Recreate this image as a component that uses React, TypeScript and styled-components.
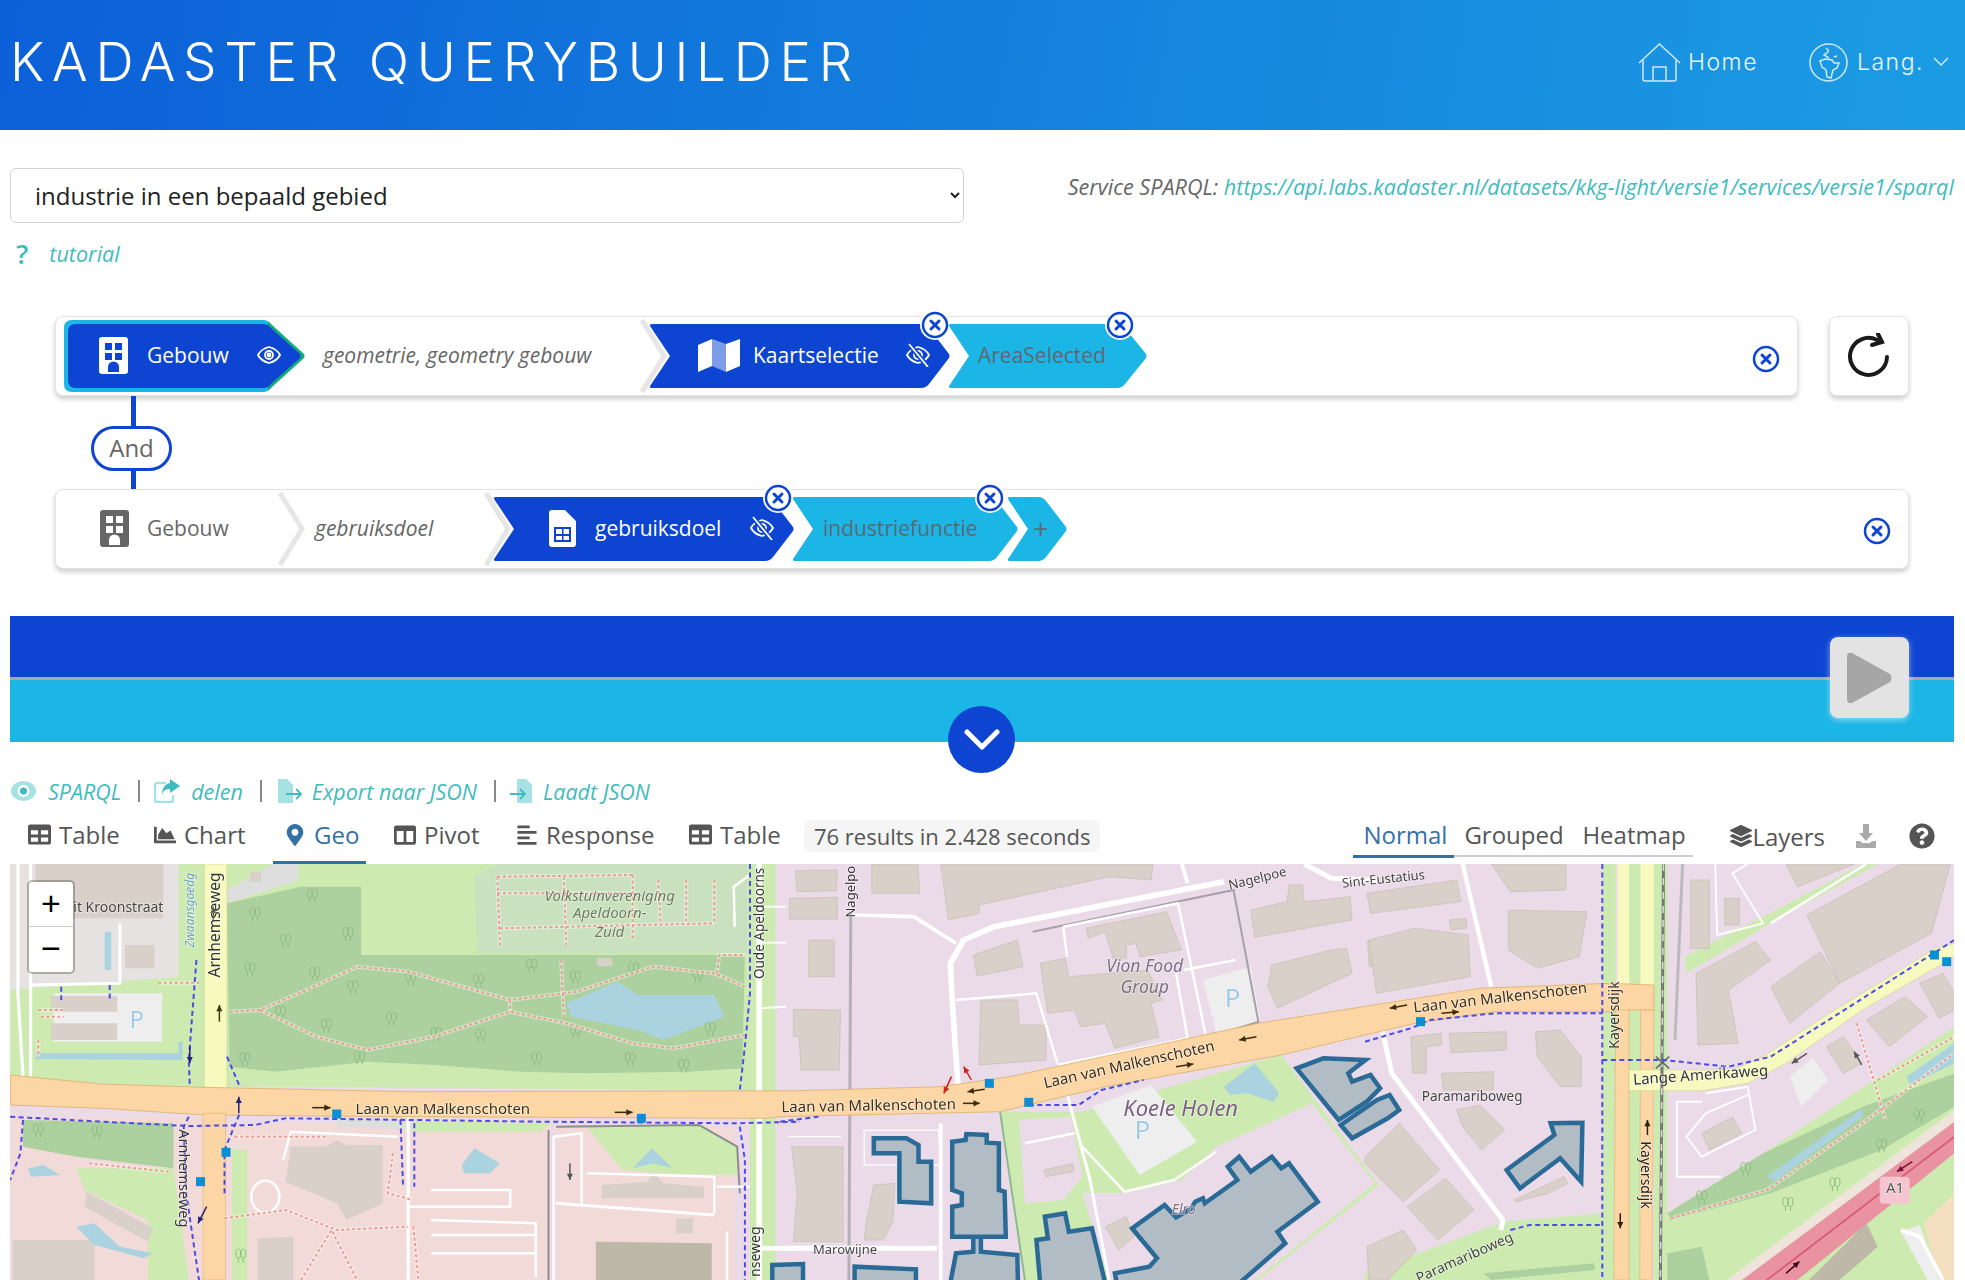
import React from 'react';
import styled, { createGlobalStyle } from 'styled-components';
import {
  FaTable, FaChartArea, FaMapMarkerAlt, FaColumns, FaAlignLeft, FaLayerGroup, FaQuestionCircle,
} from 'react-icons/fa';

const BLUE = '#0d45d2';
const CYAN = '#1bb5e6';
const TEAL = '#3fbcc0';

const GlobalStyle = createGlobalStyle`
  html, body {
    margin: 0;
    padding: 0;
    background: #fff;
    overflow: hidden;
    font-family: "Open Sans", "Liberation Sans", sans-serif;
    color: #555;
  }
  * { box-sizing: border-box; }
`;

// clip path for the query builder arrows, the notch is left out for the first one in a row
const arrowPath = (w: number, h: number, notch: number, tip: number) => {
  const left = notch
    ? `L 4 ${h} Q 0 ${h} 1 ${h - 2} L ${notch} ${h / 2} L 1 2 Q 0 0 4 0`
    : `L 8 ${h} Q 0 ${h} 0 ${h - 8} L 0 8 Q 0 0 8 0`;
  return `M ${notch ? 4 : 8} 0 L ${w - tip - 5} 0 Q ${w - tip} 0 ${w - tip + 3} 4 L ${w - 1} ${h / 2 - 2} Q ${w} ${h / 2} ${w - 1} ${h / 2 + 2} L ${w - tip + 3} ${h - 4} Q ${w - tip} ${h} ${w - tip - 5} ${h} ${left} Z`;
};

const Header = styled.header`
  height: 130px;
  background: linear-gradient(100deg, #0c5fd8 0%, #1480dd 50%, #1b9ce3 100%);
  display: flex;
  align-items: center;
  color: #fff;
  padding: 0 16px 0 10px;
`;

const Title = styled.h1`
  margin: 0;
  font-family: Inter, "Open Sans", sans-serif;
  font-weight: 300;
  font-size: 53px;
  letter-spacing: 7.7px;
  flex: 1;
  position: relative;
  top: -3px;
`;

const NavItem = styled.div<{ $gap: number; $textGap: number }>`
  display: flex;
  align-items: center;
  gap: ${(p) => p.$textGap}px;
  margin-left: ${(p) => p.$gap}px;
  font-family: Inter, "Open Sans", sans-serif;
  font-weight: 300;
  font-size: 23px;
  letter-spacing: 1.5px;
  color: #e8f4fc;
  position: relative;
  top: -3px;
`;

const TopRow = styled.div`
  display: flex;
  justify-content: space-between;
  padding: 38px 11px 0 10px;
`;

const QuerySelect = styled.select`
  width: 954px;
  height: 55px;
  padding-left: 20px;
  font-family: "Open Sans", sans-serif;
  font-size: 24px;
  color: #222;
  background: #fff;
  border: 1px solid #d2d2d6;
  border-radius: 6px;
`;

const Service = styled.div`
  font-style: italic;
  font-size: 21.6px;
  line-height: 38px;
  color: #666;
  white-space: nowrap;
`;

const TealLink = styled.span`
  color: ${TEAL};
  font-style: italic;
`;

const Tutorial = styled.div`
  display: flex;
  align-items: center;
  gap: 21px;
  height: 34px;
  margin: 13px 0 46px 16px;
  font-size: 21.6px;
`;

const QuestionMark = styled.span`
  color: ${TEAL};
  font-size: 27px;
  font-weight: 600;
`;

const Builder = styled.section`
  padding: 0 56px 0 55px;
`;

const RowLine = styled.div`
  display: flex;
  gap: 31px;
`;

const Card = styled.div`
  flex: 1;
  height: 80px;
  display: flex;
  align-items: center;
  padding-left: 8px;
  background: #fff;
  border: 1px solid #e4e4e4;
  border-radius: 8px;
  box-shadow: 0 3px 5px rgba(0, 0, 0, 0.2);
`;

const Connector = styled.div`
  height: 93px;
  margin-left: 36px;
  width: 81px;
  display: flex;
  flex-direction: column;
  align-items: center;
`;

const Stem = styled.div<{ $h: number }>`
  width: 5px;
  height: ${(p) => p.$h}px;
  background: ${BLUE};
  margin-left: 3px;
`;

const AndPill = styled.div`
  width: 81px;
  height: 45px;
  line-height: 38px;
  text-align: center;
  font-size: 24px;
  color: #666;
  border: 3px solid ${BLUE};
  border-radius: 23px;
`;

const RootOutline = styled.div`
  position: relative;
  width: 241px;
  height: 72px;
  padding: 4px;
  background: linear-gradient(90deg, ${CYAN} 0, ${CYAN} 204px, #14ab7a 204px);
  clip-path: path('${arrowPath(241, 72, 0, 37)}');
`;

const Chip = styled.div<{ $w: number; $overlap?: number }>`
  position: relative;
  flex: none;
  width: ${(p) => p.$w}px;
  height: 64px;
  margin-left: ${(p) => p.$overlap ?? 0}px;
`;

const ChipBody = styled.div<{ $path: string; $bg: string; $pad: number; $gap: number; $fg: string; $size?: number }>`
  width: 100%;
  height: 100%;
  display: flex;
  align-items: center;
  gap: ${(p) => p.$gap}px;
  padding: 0 20px 2px ${(p) => p.$pad}px;
  background: ${(p) => p.$bg};
  color: ${(p) => p.$fg};
  font-size: ${(p) => p.$size ?? 21}px;
  white-space: nowrap;
  clip-path: path('${(p) => p.$path}');
`;

const EyeSlot = styled.span`
  margin-left: auto;
  display: flex;
`;

const PlainRoot = styled.div`
  width: 214px;
  display: flex;
  align-items: center;
  gap: 18px;
  padding: 0 0 2px 36px;
  font-size: 21px;
  color: #666;
`;

const PredicateLabel = styled.div<{ $w: number; $left: number }>`
  width: ${(p) => p.$w}px;
  margin-left: ${(p) => p.$left}px;
  padding-bottom: 2px;
  font-style: italic;
  font-size: 21px;
  color: #666;
  white-space: nowrap;
`;

const Chevron = styled.svg<{ $after: number }>`
  flex: none;
  margin-right: ${(p) => p.$after}px;
`;

const BadgeWrap = styled.span<{ $right: number }>`
  position: absolute;
  top: -13px;
  right: ${(p) => p.$right}px;
  width: 28px;
  height: 28px;
  border-radius: 50%;
  background: #fff;
  display: flex;
  box-shadow: 0 0 0 1px #fff;
`;

const RowClose = styled.span<{ $down: number }>`
  margin-left: auto;
  margin-right: 17px;
  margin-top: ${(p) => p.$down}px;
  display: flex;
`;

const RefreshButton = styled.div`
  flex: none;
  width: 80px;
  height: 80px;
  display: flex;
  align-items: center;
  justify-content: center;
  border: 1px solid #e4e4e4;
  border-radius: 8px;
  box-shadow: 0 3px 5px rgba(0, 0, 0, 0.2);
`;

const RunBar = styled.section`
  position: relative;
  height: 126px;
  margin: 47px 11px 0 10px;
  background: linear-gradient(180deg, ${BLUE} 0, ${BLUE} 61px, #a8a8a8 61px, #a8a8a8 64px, ${CYAN} 64px);
`;

const PlayButton = styled.div`
  position: absolute;
  top: 21px;
  right: 45px;
  width: 79px;
  height: 81px;
  border-radius: 8px;
  background: #e3e3e3;
  box-shadow: 0 2px 6px rgba(255, 255, 255, 0.5);
  display: flex;
  align-items: center;
  justify-content: center;
`;

const CollapseButton = styled.div`
  position: absolute;
  top: 90px;
  left: 938px;
  width: 67px;
  height: 67px;
  border-radius: 50%;
  background: ${BLUE};
  display: flex;
  align-items: center;
  justify-content: center;
`;

const LinkRow = styled.div`
  display: flex;
  align-items: center;
  height: 34px;
  margin: 32px 0 12px 11px;
  font-size: 21.5px;
`;

const LinkItem = styled(TealLink)<{ $gap: number }>`
  display: flex;
  align-items: center;
  gap: ${(p) => p.$gap}px;
`;

const Pipe = styled.span`
  width: 2px;
  height: 22px;
  margin: 0 14px 0 17px;
  background: #888;
`;

const ResultBar = styled.div`
  display: flex;
  align-items: flex-start;
  height: 44px;
  padding-left: 17px;
  padding-right: 30px;
`;

const Tab = styled.div<{ $w: number; $active?: boolean; $mr?: number }>`
  width: ${(p) => p.$w}px;
  height: 44px;
  margin-right: ${(p) => p.$mr ?? 14}px;
  padding: 0 0 12px 11px;
  display: flex;
  align-items: center;
  gap: 8px;
  font-size: 24px;
  white-space: nowrap;
  color: ${(p) => (p.$active ? '#3470a8' : '#555')};
  border-bottom: 3px solid ${(p) => (p.$active ? '#3470a8' : 'transparent')};
`;

const ResultCount = styled.div`
  height: 32px;
  padding: 0 10px;
  border-radius: 8px;
  background: #f5f5f5;
  font-size: 22px;
  line-height: 32px;
  white-space: nowrap;
`;

const ModeTabs = styled.div`
  margin-left: auto;
  display: flex;
  height: 37px;
  border-bottom: 2px solid #ccc;
  width: 340px;
`;

const Mode = styled.div<{ $w: number; $active?: boolean; $mr?: number }>`
  width: ${(p) => p.$w}px;
  height: 38px;
  margin-right: ${(p) => p.$mr ?? 0}px;
  padding-left: ${(p) => (p.$active ? 10 : 0)}px;
  font-size: 24px;
  line-height: 30px;
  color: ${(p) => (p.$active ? '#3470a8' : '#555')};
  border-bottom: ${(p) => (p.$active ? '3px solid #3470a8' : 'none')};
`;

const MapTools = styled.div`
  display: flex;
  align-items: center;
  height: 32px;
  margin-left: 37px;
  font-size: 24px;
`;

const ToolGap = styled.span<{ $w: number }>`
  width: ${(p) => p.$w}px;
`;

const MapFrame = styled.div`
  position: relative;
  height: 416px;
  margin: 0 11px 0 10px;
  overflow: hidden;
`;

const MapSvg = styled.svg`
  display: block;
  filter: blur(0.45px);
  font-family: "Noto Sans", "Open Sans", sans-serif;
`;

const ZoomControl = styled.div`
  position: absolute;
  top: 16px;
  left: 17px;
  width: 48px;
  height: 94px;
  border: 2px solid rgba(0, 0, 0, 0.25);
  border-radius: 5px;
  background: #fff;
  background-clip: padding-box;
`;

const ZoomButton = styled.div<{ $top?: boolean }>`
  height: 45px;
  line-height: 42px;
  text-align: center;
  font-family: "Liberation Sans", sans-serif;
  font-size: 34px;
  color: #000;
  border-bottom: ${(p) => (p.$top ? '1px solid #ccc' : 'none')};
`;

const BuildingIcon = ({ fg }: { fg: string }) => (
  <svg width="29" height="37" viewBox="0 0 29 37">
    <path
      fill={fg}
      fillRule="evenodd"
      d="M3 0h23a3 3 0 0 1 3 3v31a3 3 0 0 1-3 3H3a3 3 0 0 1-3-3V3a3 3 0 0 1 3-3zM6 6v7h7V6zM16 6v7h7V6zM6 16v7h7v-7zM16 16v7h7v-7zM9 35h11v-5a5.500 5.500 0 0 0-11 0z"
    />
  </svg>
);

const MapIcon = () => (
  <svg width="42" height="33" viewBox="0 0 42 33">
    <path fill="#fff" d="M0 6 14 0v27L0 33z" />
    <path fill="#7f9ce8" d="M14 0l14 5v28l-14-6z" />
    <path fill="#fff" d="M28 5l14-5v27l-14 6z" />
  </svg>
);

const FileIcon = () => (
  <svg width="27" height="37" viewBox="0 0 27 37">
    <path
      fill="#fff"
      fillRule="evenodd"
      d="M3 0h13l11 11v23a3 3 0 0 1-3 3H3a3 3 0 0 1-3-3V3a3 3 0 0 1 3-3zM5 17v15h17V17zM7 19h6v5H7zM14.500 19H20v5h-5.500zM7 26h6v4H7zM14.500 26H20v4h-5.500z"
    />
  </svg>
);

const EyeIcon = ({ off }: { off?: boolean }) => (
  <svg width="24" height="24" viewBox="0 0 24 24" fill="none" stroke="#fff" strokeWidth="1.800">
    <path d="M1 12 Q4 6 12 4 Q20 6 23 12 Q20 18 12 20 Q4 18 1 12z" />
    <circle cx="12" cy="12" r="4" />
    {!off && <circle cx="12" cy="12" r="1.500" fill="#fff" />}
    {off && <path stroke={BLUE} strokeWidth="5" d="M3 1 21 23" />}
    {off && <path d="M3 1 22 24" />}
  </svg>
);

const CloseIcon = ({ size = 28 }: { size?: number }) => (
  <svg width={size} height={size} viewBox="0 0 28 28" fill="none" stroke={BLUE}>
    <circle cx="14" cy="14" r="12" strokeWidth="2.500" />
    <path strokeWidth="3" strokeLinecap="round" d="M10 10l8 8M18 10l-8 8" />
  </svg>
);

const HomeIcon = () => (
  <svg width="43" height="39" viewBox="0 0 43 39" fill="none" stroke="#cfe8fa" strokeWidth="1.500">
    <path d="M1 20 21.500 1 42 20" />
    <path d="M5 17v19a2 2 0 0 0 2 2h29a2 2 0 0 0 2-2V17" />
    <path d="M15 38V24h13v14" />
  </svg>
);

const GlobeIcon = () => (
  <svg width="39" height="39" viewBox="0 0 39 39" fill="none" stroke="#cfe8fa" strokeWidth="1.500">
    <circle cx="19.500" cy="19.500" r="18.500" />
    <path d="M17 5q3 2 2 4l-4 3 5 3M11 18l5-2 7 1 2 3 5 0-2 5-4 2-2 8-4-1-1-7-4-3z" />
    <path d="M25 14l3-1" />
  </svg>
);

const RefreshIcon = () => (
  <svg width="44" height="46" viewBox="0 0 44 46" fill="none" stroke="#1a1a1a" strokeWidth="4" strokeLinecap="round">
    <path d="M40 24a18.500 18.500 0 1 1-10-17" />
    <path d="M31 1l4 8-10 3" />
  </svg>
);

const SparqlEye = () => (
  <svg width="25" height="22" viewBox="0 0 25 22">
    <ellipse cx="12.500" cy="11" rx="12.500" ry="10" fill="#a6e2e4" />
    <circle cx="12.500" cy="11" r="6" fill="#fff" />
    <circle cx="12.500" cy="11" r="3.500" fill={TEAL} />
  </svg>
);

const ShareIcon = () => (
  <svg width="26" height="24" viewBox="0 0 26 24" fill="none">
    <path stroke="#a6e2e4" strokeWidth="2.500" d="M12 4H3a2 2 0 0 0-2 2v15a2 2 0 0 0 2 2h14a2 2 0 0 0 2-2v-5" />
    <path fill={TEAL} d="M16 0l10 7-10 7v-4c-5 0-7 2-8 6 0-7 3-11 8-12z" />
  </svg>
);

const FileArrow = ({ w }: { w: number }) => (
  <svg width={w} height="24" viewBox={`0 0 ${w} 24`}>
    <path fill="#a6e2e4" d={w > 24 ? 'M2 0h9l6 6v18H2z' : 'M7 0h9l6 6v18H7z'} />
    <path fill="none" stroke={TEAL} strokeWidth="1.800" d={w > 24 ? 'M10 15h15M20 10l5 5-5 5' : 'M0 15h15M10 10l5 5-5 5'} />
  </svg>
);

const DownloadIcon = () => (
  <svg width="20" height="24" viewBox="0 0 20 24">
    <path fill="#aaa" d="M7 0h6v9h4l-7 8-7-8h4zM0 17h4l2 2h8l2-2h4v7H0z" />
  </svg>
);

const GreyChevron = ({ after }: { after: number }) => (
  <Chevron $after={after} width="30" height="76" viewBox="0 0 30 76" fill="none" stroke="#e6e6e6" strokeWidth="5">
    <path d="M2 2 L24 38 L2 74" />
  </Chevron>
);

// every chunk of the map is noted in the coordinates of a part of the sheet: [left, top, x scale]
const SHEETS: Record<string, [number, number, number]> = {
  a: [0, 860, 1.96],
  b: [780, 860, 2.613],
  c: [1365, 860, 2.613],
};

const pts = (sheet: string, list: string) => {
  const [ox, oy, sx] = SHEETS[sheet];
  return list
    .trim()
    .split(/\s+/)
    .map((pair) => {
      const [x, y] = pair.split(',').map(Number);
      return `${(ox + x / sx).toFixed(1)},${(oy + y / 3).toFixed(1)}`;
    })
    .join(' ');
};

const at = (sheet: string, x: number, y: number) => {
  const [ox, oy, sx] = SHEETS[sheet];
  return [ox + x / sx, oy + y / 3];
};

type Area = [string, string, string];

const BUILDING = '#d9d0c9';
const GRASS = '#cdebb0';
const FOREST = '#add19e';
const WATER = '#aad3df';
const PINK = '#f2dad9';
const LILAC = '#ebdbe8';
const PAVED = '#eeeeee';

const AREAS: Area[] = [
  // left of the Arnhemseweg
  ['a', GRASS, '20,12 400,12 400,690 20,650'],
  ['a', '#e6e2e2', '20,12 350,12 350,350 20,390'],
  ['a', BUILDING, '70,12 320,12 320,175 70,175'],
  ['a', BUILDING, '245,255 303,255 303,325 245,325'],
  ['a', PAVED, '105,400 318,400 318,545 105,545'],
  ['a', BUILDING, '100,408 230,408 230,455 100,455'],
  ['a', BUILDING, '100,490 230,490 230,540 100,540'],
  ['a', WATER, '205,215 218,215 218,330 205,330'],
  ['a', WATER, '70,580 350,580 350,545 358,545 358,600 70,597'],
  // park
  ['a', GRASS, '445,12 1470,12 1470,690 445,680'],
  ['a', '#dedede', '445,130 445,90 535,12 585,12 585,60'],
  ['a', FOREST, '445,130 590,80 708,80 708,285 1460,285 1455,625 1350,635 1150,640 1020,635 850,615 720,605 540,635 450,620'],
  ['a', '#c9e1bf', '930,50 975,12 1465,12 1465,280 935,280'],
  ['a', WATER, '1110,430 1210,365 1250,405 1400,405 1420,470 1300,540 1250,510 1120,470'],
  ['a', BUILDING, '490,35 512,35 512,65 490,65'],
  ['a', BUILDING, '1170,295 1200,295 1200,318 1170,318'],
  ['a', GRASS, '1470,12 1520,12 1520,1260 1470,1260'],
  // south west
  ['a', PINK, '20,770 400,770 400,1260 20,1260'],
  ['a', FOREST, '45,780 340,790 340,925 150,890 45,860'],
  ['a', GRASS, '150,925 340,925 370,1260 290,1260 290,1080 165,990'],
  ['a', WATER, '55,925 85,915 118,945 60,950'],
  ['a', BUILDING, '170,995 300,1105 290,1145 165,1040'],
  ['a', BUILDING, '25,1140 185,1140 185,1260 25,1260'],
  ['a', WATER, '150,1100 185,1090 235,1160 300,1180 280,1195 235,1175 185,1155'],
  ['a', PINK, '440,790 1080,790 1080,1260 440,1260'],
  ['a', GRASS, '455,870 485,870 485,1260 455,1260'],
  ['a', GRASS, '660,780 1080,790 1060,815 820,815'],
  ['a', '#dedede', '660,780 810,785 810,810 660,800'],
  ['a', BUILDING, '570,860 640,860 660,840 680,855 750,855 750,1030 680,1080 660,1030 560,965'],
  ['a', WATER, '905,915 930,865 980,910 960,940 910,940'],
  ['a', BUILDING, '505,1135 575,1130 575,1260 505,1260'],
  ['a', PINK, '1090,800 1440,800 1440,1260 1090,1260'],
  ['a', GRASS, '1150,800 1375,795 1445,860 1445,945 1300,940 1220,930'],
  ['a', WATER, '1240,925 1278,865 1318,925 1280,910'],
  ['a', '#bdb8a8', '1168,1145 1395,1150 1395,1260 1168,1260'],
  ['a', BUILDING, '1180,975 1270,965 1280,935 1300,970 1380,980 1380,1015 1180,1015'],
  ['a', BUILDING, '1325,1075 1358,1075 1358,1120 1325,1120'],
  // along the long road, middle part
  ['b', GRASS, '575,755 790,755 1310,585 1565,975 1250,1260 640,1260'],
  ['b', LILAC, '1050,960 1140,860 1390,730 1555,970 1240,1260 860,1260 790,1000 900,1000'],
  ['b', LILAC, '625,780 760,770 790,950 740,1020 640,1030'],
  ['b', WATER, '1160,680 1240,610 1305,700 1290,725 1220,700 1175,705'],
  ['b', PAVED, '815,740 970,675 1090,845 940,945'],
  ['b', PAVED, '1105,360 1230,320 1255,480 1140,520'],
  // south east
  ['c', GRASS, '0,1260 0,1240 360,1085 620,1060 620,1260'],
  ['c', GRASS, '620,12 655,12 655,1260 620,1260'],
  ['c', GRASS, '690,12 720,12 720,1260 690,1260'],
  ['c', GRASS, '755,12 790,12 790,1260 755,1260'],
  ['c', GRASS, '790,1070 1540,500 1540,1260 790,1260'],
  ['c', FOREST, '790,1060 1040,880 1300,740 1540,640 1540,740 1350,870 1060,1000 800,1080'],
  ['c', FOREST, '790,1180 880,1160 900,1260 790,1260'],
  ['c', FOREST, '310,1240 600,1210 600,1230 330,1260'],
  ['c', '#eee4db', '945,1260 1540,750 1540,785 985,1260'],
  ['c', '#e892a2', '985,1260 1540,785 1540,880 1130,1260'],
  ['c', '#bdb8a8', '1160,1260 1310,1090 1340,1160 1240,1260'],
  ['c', '#f5dfc1', '1460,1090 1540,1000 1540,1260 1500,1260'],
  ['c', PAVED, '1400,1115 1450,1095 1500,1260 1470,1260'],
  ['c', WATER, '1050,950 1300,745 1300,770 1070,965'],
  ['c', WATER, '1415,650 1540,550 1540,610 1425,675'],
  ['c', GRASS, '835,290 1040,170 1300,12 1340,12 1060,190 840,340'],
  ['c', PAVED, '1110,650 1170,595 1210,660 1140,740'],
];

const BUILDINGS: [string, string][] = [
  ['b', '40,32 150,30 148,92 45,95'],
  ['b', '25,115 150,112 150,178 25,178'],
  ['b', '240,12 360,12 365,100 240,100'],
  ['b', '420,12 975,12 970,60 860,50 520,135 520,160 440,180'],
  ['b', '75,240 142,240 142,350 75,350'],
  ['b', '35,448 158,450 155,630 55,630 50,530 35,530'],
  ['b', '505,285 620,240 635,320 515,348'],
  ['b', '525,420 620,420 625,495 695,495 695,600 520,615'],
  ['b', '800,205 1010,155 1050,270 940,290 930,250 905,255 905,295 870,295 850,215 805,235'],
  ['b', '680,310 745,295 755,350 960,330 1000,420 970,430 990,530 875,565 850,490 785,500 770,450 700,460'],
  ['b', '1230,150 1325,125 1330,75 1365,75 1370,125 1490,110 1495,180 1240,232'],
  ['b', '1285,315 1440,270 1480,265 1495,340 1300,445 1275,380'],
  ['b', '1535,245 1568,235 1568,310 1540,320'],
  ['b', '30,860 165,860 165,1145 35,1145 45,1000'],
  ['b', '245,975 300,970 295,1085 270,1140 220,1140 225,1090'],
  ['b', '850,1100 905,1070 925,1130 885,1170'],
  ['b', '690,930 765,910 768,935 695,950'],
  ['c', '1155,165 1400,12 1530,12 1480,220 1240,370'],
  ['c', '1060,380 1190,275 1240,370 1110,490'],
  ['c', '1310,480 1410,410 1470,470 1370,560'],
  ['c', '1450,370 1510,340 1540,400 1540,450 1500,475'],
  ['c', '865,340 1020,245 1060,300 950,390 975,550 870,555'],
  ['c', '850,60 900,60 900,265 850,265'],
  ['c', '940,115 978,115 978,195 940,195'],
  ['c', '1100,12 1280,12 1130,80'],
  ['c', '375,150 580,155 560,290 450,325 375,270'],
  ['c', '10,240 130,205 270,225 275,350 30,400'],
  ['c', '5,100 240,60 250,125 15,160'],
  ['c', '330,12 525,12 525,90 380,95'],
  ['c', '220,180 265,175 265,205 225,210'],
  ['c', '120,530 200,520 200,555 160,560 160,640 125,640'],
  ['c', '220,520 370,515 370,570 225,578'],
  ['c', '445,515 510,510 565,590 565,680 510,680 450,590'],
  ['c', '200,640 335,635 335,690 205,690'],
  ['c', '240,750 300,735 365,810 305,870 255,800'],
  ['c', '0,890 90,790 195,930 100,1025 0,910'],
  ['c', '110,1040 210,955 285,1050 190,1140'],
  ['c', '5,1160 100,1110 135,1170 60,1260 10,1260'],
  ['c', '390,1020 520,950 530,970 480,1000 395,1025'],
  ['c', '1205,560 1250,530 1300,610 1250,640'],
  ['c', '880,820 960,770 985,820 900,870'],
];

const RESULTS: [string, string][] = [
  ['b', '245,835 330,835 362,855 362,905 395,905 395,1030 312,1025 312,880 245,880'],
  ['b', '505,1130 525,1130 525,1175 620,1185 622,1270 445,1270 460,1180 505,1175'],
  ['b', '450,845 485,840 487,822 540,825 540,848 572,850 572,990 587,995 590,1130 450,1130 450,1040 475,1035 475,1000 450,990'],
  ['b', '195,1270 195,1220 355,1228 355,1270'],
  ['b', '-20,1215 60,1212 60,1270 -20,1270'],
  ['b', '670,1140 700,1135 692,1070 745,1060 755,1115 815,1105 850,1270 680,1270'],
  ['b', '920,1105 1005,1035 1035,1072 1075,1045 1085,1025 1105,1015 1110,1030 1195,960 1170,920 1200,890 1230,935 1285,890 1310,925 1330,910 1405,1025 1300,1115 1320,1150 1200,1270 880,1270 875,1240 965,1220 985,1195'],
  ['b', '1350,625 1420,595 1530,600 1485,640 1495,665 1543,645 1568,685 1533,725 1460,780'],
  ['b', '1465,795 1560,720 1593,705 1618,750 1588,775 1495,835'],
  ['c', '370,930 495,825 485,790 568,788 565,965 510,895 405,985'],
];

const WHITE_ROADS: [string, number, string][] = [
  ['a', 5, '35,12 35,400 45,650'],
  ['a', 5, '60,12 60,650'],
  ['a', 5, '60,375 235,370 235,190'],
  ['a', 9, '1488,12 1488,1260'],
  ['a', 4, '1440,200 1438,80 1470,45'],
  ['a', 3, '1490,140 1540,140'],
  ['a', 3, '1490,248 1540,248'],
  ['a', 3, '1490,445 1540,440'],
  ['a', 4, '555,900 570,815 780,830'],
  ['a', 5, '800,770 800,1260'],
  ['a', 4, '845,990 1000,990 1000,1040 800,1040'],
  ['a', 4, '845,1080 1050,1090 1050,1250'],
  ['a', 4, '845,1125 1050,1125'],
  ['a', 4, '845,1180 1050,1180'],
  ['a', 4, '1085,1260 1085,830 1140,820 1140,1040'],
  ['a', 4, '1150,940 1280,945 1400,950 1400,1060'],
  ['a', 5, '1090,1030 1400,1065'],
  ['a', 4, '1405,980 1470,980'],
  ['a', 4, '1425,1115 1425,1260'],
  ['a', 7, '1490,1165 1568,1165'],
  ['b', 6, '190,165 350,170 460,250'],
  ['b', 9, '465,680 450,420 445,310 480,240 560,200 1160,65'],
  ['b', 6, '1050,12 1065,70'],
  ['b', 8, '1370,12 1440,55 1560,60'],
  ['b', 4, '460,420 670,400 725,610'],
  ['b', 4, '740,200 1040,130 1115,540'],
  ['b', 4, '740,200 750,290'],
  ['b', 4, '725,615 1065,535 1035,340'],
  ['b', 4, '1055,330 1190,300'],
  ['b', 5, '750,700 810,960 860,1260'],
  ['b', 4, '790,860 900,995 1030,960 1140,875'],
  ['b', 4, '640,850 770,820'],
  ['b', 6, '420,790 420,1260'],
  ['b', 8, '0,1165 410,1165'],
  ['b', 2, '20,830 160,830'],
  ['b', 2, '220,810 415,810 420,915 220,915 220,810'],
  ['c', 7, '255,12 330,380'],
  ['c', 8, '45,510 70,640 360,1080 355,1110'],
  ['c', 3, '915,12 920,225 1040,190 960,40 1000,12'],
  ['c', 4, '1060,190 1310,12'],
  ['c', 3, '890,700 1000,680 1020,810 880,890 840,830 890,760 1000,705'],
  ['c', 3, '815,725 880,725'],
  ['c', 3, '815,725 815,950 930,950'],
  ['c', 6, '1400,1110 1450,1130 1510,1260'],
];

const GREY_LINES: [string, number, string, string][] = [
  ['b', 3, '#b5b0b5', '185,160 180,1260'],
  ['b', 2, '#a8a0a8', '660,215 1185,90 1250,485 1130,530 735,620'],
  ['b', 2, '#8fb98f', '575,755 640,1260'],
  ['a', 2, '#8d8d8d', '1075,810 1075,1260'],
  ['a', 2, '#8d8d8d', '1090,800 1370,795 1445,860 1450,1000'],
  ['c', 3, '#bbb', '830,12 810,540'],
];

const BLUE_DASHES: [string, string][] = [
  ['a', '20,770 200,785 370,798 500,795 560,775 1060,785 1440,790 1568,785'],
  ['a', '385,300 380,400 370,600 372,680'],
  ['a', '445,590 470,680'],
  ['a', '370,770 360,800 365,1000 390,1260'],
  ['a', '440,1000 440,870 470,760'],
  ['a', '1470,12 1470,400 1460,560 1450,690'],
  ['a', '1450,800 1460,900 1460,1260'],
  ['a', '785,780 790,980'],
  ['a', '812,790 812,980'],
  ['a', '45,780 40,880 20,960'],
  ['a', '120,380 120,420'],
  ['a', '215,375 215,420'],
  ['b', '0,785 100,770'],
  ['b', '650,735 780,735 840,690 950,660'],
  ['c', '620,12 620,1260'],
  ['c', '0,545 120,505 170,480 340,460 620,460'],
  ['c', '620,600 780,600 950,620 1060,590 1280,430 1540,240'],
  ['c', '380,1110 430,1095 620,1095'],
];

const RED_DASHES: [string, string][] = [
  ['a', '450,455 510,450 600,390 700,320 800,335 1000,420 1130,395 1280,320 1400,340 1460,380'],
  ['a', '510,450 620,530 720,570 850,530 1000,455 1110,490 1240,550 1320,565 1460,525'],
  ['a', '1000,420 1000,455'],
  ['a', '1100,300 1105,470'],
  ['a', '1405,340 1410,285 1460,285'],
  ['a', '975,50 1240,45'],
  ['a', '975,100 1240,100'],
  ['a', '980,205 1400,190'],
  ['a', '975,50 980,260'],
  ['a', '1105,50 1110,255'],
  ['a', '1240,45 1240,240'],
  ['a', '1345,60 1345,190'],
  ['a', '1400,60 1400,190'],
  ['a', '1290,60 1295,190'],
  ['a', '310,368 390,368'],
  ['a', '75,450 125,450'],
  ['a', '80,470 125,470'],
  ['a', '75,540 75,590'],
  ['a', '175,910 330,935'],
  ['a', '460,830 640,830'],
  ['a', '770,880 760,1000 810,1020'],
  ['a', '440,1075 560,1050 660,1110 800,1100'],
  ['a', '590,1260 650,1110 700,1260'],
  ['a', '810,1100 820,1260'],
  ['c', '1285,490 1360,780'],
  ['c', '800,1075 1050,990 1300,790 1540,580'],
  ['c', '1340,660 1540,530'],
];

const TREES: [string, number, number][] = [
  ['a', 612, 110], ['a', 500, 165], ['a', 560, 245], ['a', 682, 225], ['a', 490, 330], ['a', 617, 345],
  ['a', 692, 385], ['a', 805, 360], ['a', 938, 365], ['a', 1042, 320], ['a', 1128, 355], ['a', 1242, 330],
  ['a', 1368, 350], ['a', 550, 460], ['a', 640, 500], ['a', 767, 480], ['a', 855, 525], ['a', 942, 530],
  ['a', 1128, 518], ['a', 1392, 510], ['a', 480, 600], ['a', 705, 595], ['a', 1052, 600], ['a', 1235, 600],
  ['a', 1340, 620], ['a', 75, 815], ['a', 190, 820], ['a', 472, 1190],
  ['c', 995, 930], ['c', 880, 1015], ['c', 1105, 1035], ['c', 1228, 975], ['c', 1350, 860], ['c', 1448, 770],
];

const ARROWS: [string, number, number, number, number, string][] = [
  ['a', 612, 743, 648, 743, '#3a2c08'],
  ['a', 1205, 757, 1240, 757, '#3a2c08'],
  ['a', 430, 485, 430, 435, '#3a3a10'],
  ['a', 418, 185, 418, 140, '#3a3a10'],
  ['a', 372, 560, 372, 610, '#23237a'],
  ['a', 468, 760, 468, 710, '#23237a'],
  ['a', 405, 1040, 388, 1090, '#23237a'],
  ['a', 1117, 910, 1117, 960, '#555'],
  ['b', 478, 730, 522, 730, '#3a2c08'],
  ['b', 535, 688, 490, 695, '#3a2c08'],
  ['b', 1245, 530, 1200, 540, '#3a2c08'],
  ['b', 1035, 620, 1080, 612, '#3a2c08'],
  ['b', 500, 660, 480, 620, '#c22'],
  ['b', 448, 650, 428, 700, '#c22'],
  ['c', 110, 435, 65, 445, '#3a2c08'],
  ['c', 200, 460, 245, 455, '#3a2c08'],
  ['c', 738, 825, 738, 780, '#2b2108'],
  ['c', 667, 1060, 667, 1105, '#2b2108'],
  ['c', 1155, 580, 1115, 610, '#555'],
  ['c', 1298, 615, 1278, 575, '#555'],
  ['c', 1430, 905, 1390, 935, '#7a1030'],
  ['c', 1100, 1240, 1135, 1205, '#3a0818'],
];

const STOPS: [string, number, number][] = [
  ['a', 660, 762], ['a', 1257, 775], ['a', 443, 877], ['a', 393, 965],
  ['b', 547, 670], ['b', 650, 727],
  ['c', 145, 485], ['c', 1488, 285], ['c', 1520, 305],
];

type Label = [string, number, number, string, number, number, string, boolean?];

const LABELS: Label[] = [
  ['a', 232, 155, 'it Kroonstraat', 14, 0, '#444'],
  ['a', 432, 195, 'Arnhemseweg', 15.500, -90, '#333'],
  ['a', 380, 150, 'Zwaansgoedg', 12, -90, '#6f9fc0', true],
  ['a', 1195, 122, 'Volkstuinvereniging', 15, 0, '#6b7b55', true],
  ['a', 1195, 175, 'Apeldoorn-', 15, 0, '#6b7b55', true],
  ['a', 1195, 230, 'Zuid', 15, 0, '#6b7b55', true],
  ['a', 1498, 190, 'Oude Apeldoorns', 13.500, -90, '#333'],
  ['a', 350, 955, 'Arnhemseweg', 14.500, 90, '#333'],
  ['a', 868, 762, 'Laan van Malkenschoten', 15, 0, '#3a2f1c'],
  ['a', 1490, 1175, 'nseweg', 14, -90, '#333'],
  ['a', 268, 505, 'P', 24, 0, '#9ecbe8'],
  ['b', 232, 752, 'Laan van Malkenschoten', 15, -1, '#3a2f1c'],
  ['b', 197, 95, 'Nagelpo', 13, -90, '#333'],
  ['b', 1250, 68, 'Nagelpoe', 13, -14, '#444'],
  ['b', 1578, 70, 'Sint-Eustatius', 13, -6, '#444'],
  ['b', 915, 628, 'Laan van Malkenschoten', 15, -12.500, '#3a2f1c'],
  ['b', 953, 335, 'Vion Food', 17.500, 0, '#7c6d82', true],
  ['b', 953, 398, 'Group', 17.500, 0, '#7c6d82', true],
  ['b', 1047, 768, 'Koele Holen', 22, 0, '#7c6082', true],
  ['b', 170, 1183, 'Marowijne', 13, 0, '#444'],
  ['b', 1055, 1062, 'Elro', 14, 0, '#7c6d82', true],
  ['b', 1183, 440, 'P', 26, 0, '#9ecbe8'],
  ['b', 947, 838, 'P', 26, 0, '#9ecbe8'],
  ['c', 355, 428, 'Laan van Malkenschoten', 15, -6.500, '#3a2f1c'],
  ['c', 663, 465, 'Kayersdijk', 14, -90, '#333'],
  ['c', 722, 945, 'Kayersdijk', 14, 90, '#222'],
  ['c', 878, 660, 'Lange Amerikaweg', 15, -4, '#333'],
  ['c', 280, 722, 'Paramariboweg', 13.500, 0, '#444'],
  ['c', 265, 1205, 'Paramariboweg', 14, -24, '#444'],
  ['c', 1385, 1000, 'A1', 15, 0, '#555'],
];

const MapDrawing = () => (
  <MapSvg width="1944" height="416" viewBox="10 864 1944 416">
    <rect x="10" y="864" width="1944" height="416" fill={LILAC} />
    {AREAS.map(([s, fill, list], i) => (
      <polygon key={`area_${i}`} points={pts(s, list)} fill={fill} />
    ))}
    {TREES.map(([s, x, y], i) => {
      const [tx, ty] = at(s, x, y);
      return (
        <g key={`tree_${i}`} fill="none" stroke="#8fbc82" strokeWidth="1">
          <ellipse cx={tx - 2.500} cy={ty - 3} rx="2.500" ry="4.500" />
          <ellipse cx={tx + 2.500} cy={ty - 3} rx="2.500" ry="4.500" />
          <path d={`M${tx - 2.500} ${ty + 1}v5M${tx + 2.500} ${ty + 1}v5`} />
        </g>
      );
    })}
    {GREY_LINES.map(([s, w, stroke, list], i) => (
      <polyline key={`grey_${i}`} points={pts(s, list)} fill="none" stroke={stroke} strokeWidth={w} />
    ))}
    {BUILDINGS.map(([s, list], i) => (
      <polygon key={`house_${i}`} points={pts(s, list)} fill={BUILDING} stroke="#c4b8ae" strokeWidth="0.600" />
    ))}
    {WHITE_ROADS.map(([s, w, list], i) => (
      <polyline key={`white_${i}`} points={pts(s, list)} fill="none" stroke="#fff" strokeWidth={w / 1.6} strokeLinejoin="round" />
    ))}
    <ellipse cx={at('a', 520, 1010)[0]} cy={at('a', 520, 1010)[1]} rx="14" ry="16" fill="none" stroke="#fff" strokeWidth="2.500" />
    {/* secondary roads */}
    <polygon points={pts('a', '400,12 445,12 445,690 400,690')} fill="#f7fabf" stroke="#c9c98a" strokeWidth="0.500" />
    <polygon points={pts('c', '660,12 690,12 690,380 660,380')} fill="#f7fabf" />
    <polygon points={pts('c', '720,12 755,12 755,380 720,380')} fill="#f7fabf" />
    {/* main road */}
    <polygon
      points={`${pts('a', '20,645 200,672 400,682 800,695 1568,692')} ${pts('b', '420,680 600,650 1250,490 1568,432')} ${pts('c', '300,385 640,370 755,375 755,450 690,450 690,455 340,455 130,490 0,525')} ${pts('b', '1310,585 850,680 575,755 0,770')} ${pts('a', '1500,775 800,770 400,765 200,745 20,735')}`}
      fill="#fcd6a4"
      stroke="#d9a95c"
      strokeWidth="0.700"
    />
    <polygon points={pts('a', '398,760 442,760 442,1260 398,1260')} fill="#fcd6a4" stroke="#d9a95c" strokeWidth="0.500" />
    <polygon points={pts('c', '655,450 690,450 690,1260 650,1260')} fill="#fcd6a4" stroke="#d9a95c" strokeWidth="0.500" />
    <polygon points={pts('c', '720,450 755,450 750,1260 718,1260')} fill="#fcd6a4" stroke="#d9a95c" strokeWidth="0.500" />
    <polygon
      points={pts('c', '690,630 960,630 1040,590 1200,470 1490,265 1540,250 1540,290 1300,450 1100,610 1000,670 880,692 690,692')}
      fill="#f7fabf"
      stroke="#c9c98a"
      strokeWidth="0.500"
    />
    <polyline points={pts('c', '780,12 772,1260')} fill="none" stroke="#777" strokeWidth="3" />
    <polyline points={pts('c', '780,12 772,1260')} fill="none" stroke="#ddd" strokeWidth="1.500" strokeDasharray="7 7" />
    <path d={`M${at('c', 760, 590).join(' ')}L${at('c', 795, 625).join(' ')}M${at('c', 795, 590).join(' ')}L${at('c', 760, 625).join(' ')}`} stroke="#666" strokeWidth="1.500" />
    <polyline points={pts('c', '1050,1260 1540,830')} fill="none" stroke="#d4566f" strokeWidth="1.500" />
    {RED_DASHES.map(([s, list], i) => (
      <polyline key={`case_${i}`} points={pts(s, list)} fill="none" stroke="rgba(255,255,255,0.4)" strokeWidth="4" />
    ))}
    {RED_DASHES.map(([s, list], i) => (
      <polyline key={`red_${i}`} points={pts(s, list)} fill="none" stroke="#ec9c90" strokeWidth="2" strokeDasharray="3 2.500" />
    ))}
    {BLUE_DASHES.map(([s, list], i) => (
      <polyline key={`dash_${i}`} points={pts(s, list)} fill="none" stroke="#4b4be6" strokeWidth="2" strokeDasharray="5 3.500" />
    ))}
    {RESULTS.map(([s, list], i) => (
      <polygon key={`result_${i}`} points={pts(s, list)} fill="#b2bcc4" stroke="#2a6a96" strokeWidth="4.500" strokeLinejoin="miter" />
    ))}
    {ARROWS.map(([s, x1, y1, x2, y2, color], i) => {
      const [ax, ay] = at(s, x1, y1);
      const [bx, by] = at(s, x2, y2);
      const angle = Math.atan2(by - ay, bx - ax);
      const wing = (d: number) => `${(bx - 7 * Math.cos(angle + d)).toFixed(1)},${(by - 7 * Math.sin(angle + d)).toFixed(1)}`;
      return (
        <g key={`arrow_${i}`}>
          <line x1={ax} y1={ay} x2={bx} y2={by} stroke={color} strokeWidth="1.500" />
          <polygon points={`${bx},${by} ${wing(0.45)} ${wing(-0.45)}`} fill={color} />
        </g>
      );
    })}
    {STOPS.map(([s, x, y], i) => {
      const [cx, cy] = at(s, x, y);
      return <rect key={`stop_${i}`} x={cx - 4.500} y={cy - 4.500} width="9" height="9" fill="#0a8fd6" />;
    })}
    <rect x={at('c', 1345, 950)[0]} y={at('c', 1345, 950)[1]} width="30" height="27" rx="4" fill="#f5c6cf" />
    {LABELS.map(([s, x, y, text, size, rotate, color, italic], i) => {
      const [tx, ty] = at(s, x, y);
      return (
        <text
          key={`label_${i}`}
          x={tx}
          y={ty}
          fontSize={size}
          fill={color}
          fontStyle={italic ? 'italic' : 'normal'}
          textAnchor="middle"
          stroke="rgba(255,255,255,0.55)"
          strokeWidth="1.500"
          paintOrder="stroke"
          transform={rotate ? `rotate(${rotate} ${tx} ${ty})` : undefined}
        >
          {text}
        </text>
      );
    })}
  </MapSvg>
);

const App = () => (
  <>
    <GlobalStyle />
    <Header>
      <Title>KADASTER QUERYBUILDER</Title>
      <NavItem $gap={0} $textGap={7}>
        <HomeIcon />
        Home
      </NavItem>
      <NavItem $gap={51} $textGap={9}>
        <GlobeIcon />
        Lang.
        <svg width="16" height="10" viewBox="0 0 16 10" fill="none" stroke="#cfe8fa" strokeWidth="1.500">
          <path d="M1 1l7 7 7-7" />
        </svg>
      </NavItem>
    </Header>

    <TopRow>
      <QuerySelect defaultValue="industrie">
        <option value="industrie">industrie in een bepaald gebied</option>
      </QuerySelect>
      <Service>
        Service SPARQL: <TealLink>https://api.labs.kadaster.nl/datasets/kkg-light/versie1/services/versie1/sparql</TealLink>
      </Service>
    </TopRow>
    <Tutorial>
      <QuestionMark>?</QuestionMark>
      <TealLink>tutorial</TealLink>
    </Tutorial>

    <Builder>
      <RowLine>
        <Card>
          <RootOutline>
            <ChipBody $path={arrowPath(233, 64, 0, 33)} $bg={BLUE} $fg="#fff" $pad={31} $gap={19}>
              <BuildingIcon fg="#fff" />
              Gebouw
              <EyeSlot><EyeIcon /></EyeSlot>
            </ChipBody>
          </RootOutline>
          <PredicateLabel $w={317} $left={18}>geometrie, geometry gebouw</PredicateLabel>
          <GreyChevron after={-21} />
          <Chip $w={301}>
            <ChipBody $path={arrowPath(301, 64, 21, 24)} $bg={BLUE} $fg="#fff" $pad={49} $gap={13}>
              <MapIcon />
              Kaartselectie
              <EyeSlot><EyeIcon off /></EyeSlot>
            </ChipBody>
            <BadgeWrap $right={1}><CloseIcon /></BadgeWrap>
          </Chip>
          <Chip $w={199} $overlap={-2}>
            <ChipBody $path={arrowPath(199, 64, 21, 25)} $bg={CYAN} $fg="#5b6a72" $pad={30} $gap={0}>
              AreaSelected
            </ChipBody>
            <BadgeWrap $right={13}><CloseIcon /></BadgeWrap>
          </Chip>
          <RowClose $down={5}><CloseIcon /></RowClose>
        </Card>
        <RefreshButton><RefreshIcon /></RefreshButton>
      </RowLine>

      <Connector>
        <Stem $h={30} />
        <AndPill>And</AndPill>
        <Stem $h={18} />
      </Connector>

      <RowLine>
        <Card>
          <PlainRoot>
            <BuildingIcon fg="#666" />
            Gebouw
          </PlainRoot>
          <GreyChevron after={0} />
          <PredicateLabel $w={169} $left={7}>gebruiksdoel</PredicateLabel>
          <GreyChevron after={-21} />
          <Chip $w={301}>
            <ChipBody $path={arrowPath(301, 64, 21, 24)} $bg={BLUE} $fg="#fff" $pad={56} $gap={19}>
              <FileIcon />
              gebruiksdoel
              <EyeSlot><EyeIcon off /></EyeSlot>
            </ChipBody>
            <BadgeWrap $right={2}><CloseIcon /></BadgeWrap>
          </Chip>
          <Chip $w={226} $overlap={-2}>
            <ChipBody $path={arrowPath(226, 64, 21, 24)} $bg={CYAN} $fg="#5b6a72" $pad={31} $gap={0}>
              industriefunctie
            </ChipBody>
            <BadgeWrap $right={14}><CloseIcon /></BadgeWrap>
          </Chip>
          <Chip $w={60} $overlap={-11}>
            <ChipBody $path={arrowPath(60, 64, 21, 24)} $bg={CYAN} $fg="#5b6a72" $pad={26} $gap={0} $size={27}>
              +
            </ChipBody>
          </Chip>
          <RowClose $down={4}><CloseIcon /></RowClose>
        </Card>
      </RowLine>
    </Builder>

    <RunBar>
      <PlayButton>
        <svg width="46" height="52" viewBox="0 0 46 52">
          <path fill="#a6a6a6" d="M0 5Q0 0 5 1L43 22Q46 26 43 30L5 51Q0 52 0 47z" />
        </svg>
      </PlayButton>
      <CollapseButton>
        <svg width="36" height="22" viewBox="0 0 36 22" fill="none" stroke="#fff" strokeWidth="5" strokeLinecap="round" strokeLinejoin="round">
          <path d="M3 3l15 15L33 3" />
        </svg>
      </CollapseButton>
    </RunBar>

    <LinkRow>
      <LinkItem $gap={12}><SparqlEye />SPARQL</LinkItem>
      <Pipe />
      <LinkItem $gap={11}><ShareIcon />delen</LinkItem>
      <Pipe />
      <LinkItem $gap={10}><FileArrow w={26} />Export naar JSON</LinkItem>
      <Pipe />
      <LinkItem $gap={11}><FileArrow w={22} />Laadt JSON</LinkItem>
    </LinkRow>

    <ResultBar>
      <Tab $w={112}><FaTable size={23} />Table</Tab>
      <Tab $w={116}><FaChartArea size={22} />Chart</Tab>
      <Tab $w={93} $active $mr={17}><FaMapMarkerAlt size={22} />Geo</Tab>
      <Tab $w={108}><FaColumns size={22} />Pivot</Tab>
      <Tab $w={159}><FaAlignLeft size={22} />Response</Tab>
      <Tab $w={114} $mr={12}><FaTable size={23} />Table</Tab>
      <ResultCount>76 results in 2.428 seconds</ResultCount>
      <ModeTabs>
        <Mode $w={101} $mr={10} $active>Normal</Mode>
        <Mode $w={118}>Grouped</Mode>
        <Mode $w={111}>Heatmap</Mode>
      </ModeTabs>
      <MapTools>
        <FaLayerGroup size={22} />
        Layers
        <ToolGap $w={31} />
        <DownloadIcon />
        <ToolGap $w={33} />
        <FaQuestionCircle size={26} />
      </MapTools>
    </ResultBar>

    <MapFrame>
      <MapDrawing />
      <ZoomControl>
        <ZoomButton $top>+</ZoomButton>
        <ZoomButton>&minus;</ZoomButton>
      </ZoomControl>
    </MapFrame>
  </>
);

export default App;
